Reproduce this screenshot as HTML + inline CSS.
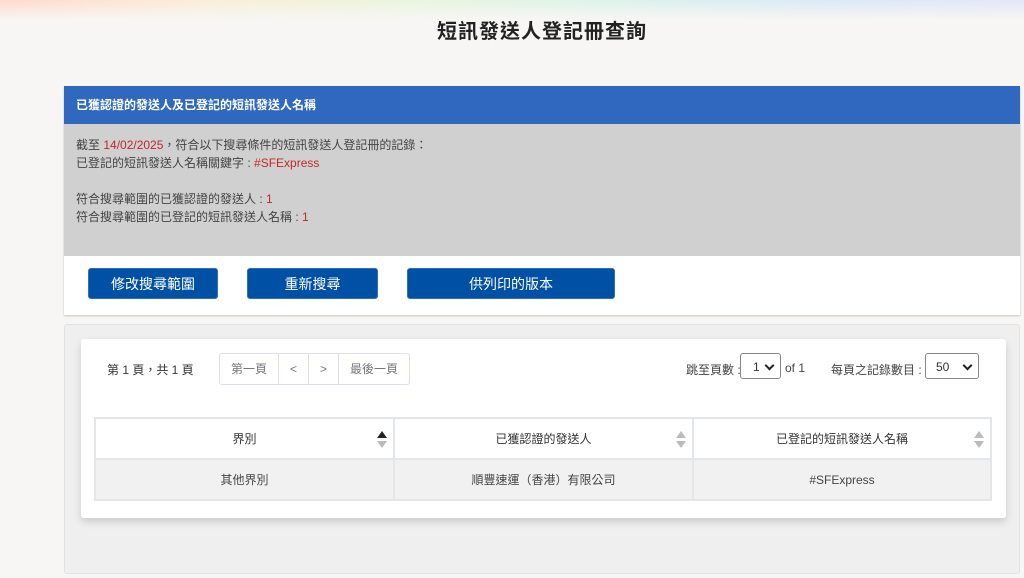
<!DOCTYPE html>
<html><head><meta charset="utf-8"><style>
*{box-sizing:border-box;margin:0;padding:0}
body{width:1024px;height:578px;overflow:hidden;background:#f7f6f4;font-family:"Liberation Sans","Noto Sans CJK TC",sans-serif;color:#333;position:relative}
.rb{position:absolute;left:0;top:0;width:1024px;height:20px;background:linear-gradient(90deg,#ffd9cf,#fbeed8,#eaf5df,#dcf3ea,#dbe9f7,#e4e6f8);}
.rb:after{content:"";position:absolute;inset:0;background:linear-gradient(180deg,rgba(247,246,244,0),#f7f6f4)}
h1{position:absolute;top:15px;left:0;width:1084px;text-align:center;font-size:20px;font-weight:bold;color:#222;letter-spacing:1px}
.p1{position:absolute;left:64px;top:86px;width:956px;height:229px;background:#fff;box-shadow:0 1px 2px rgba(0,0,0,.2)}
.hd{height:38px;background:#3068c0;color:#fff;font-size:12px;font-weight:bold;line-height:38px;padding-left:12px}
.bd{height:132px;background:#d0d0d0;font-size:12px;line-height:18px;padding:12px 12px;color:#444}
.r{color:#c0282a}
.btn{position:absolute;top:182px;height:31px;background:#0050a6;color:#fff;font-size:14px;border-radius:3px;text-align:center;line-height:31px;border:1px solid #2c6fc4}
.p2{position:absolute;left:64px;top:324px;width:956px;height:250px;background:#efefef;border:1px solid #e2e2e2;border-radius:3px}
.card{position:absolute;left:16px;top:14px;width:925px;height:179px;background:#fff;box-shadow:0 4px 8px rgba(0,0,0,.15);border-radius:3px}
.t{position:absolute;font-size:12px;color:#333}
.pg{position:absolute;left:138px;top:14px;height:32px;border:1px solid #dde;border-radius:3px;display:flex;font-size:12px;color:#777}
.pg span{border-right:1px solid #dde;line-height:30px;padding:0 11px}
.pg span:last-child{border-right:0}
.sel{position:absolute;height:26px;border:1px solid #888;border-radius:3px;font-size:12px;line-height:24px;padding-left:10px}
.sel:after{content:"";position:absolute;right:7px;top:8px;width:5px;height:5px;border-right:2px solid #222;border-bottom:2px solid #222;transform:rotate(45deg)}
table{position:absolute;left:13px;top:78px;width:898px;border-collapse:collapse;font-size:12px}
td,th{border:2px solid #e4e7ea;text-align:center;position:relative}
th{height:41px;font-weight:normal;background:#fff;color:#333}
td{height:41px;background:#f1f1f1;color:#444}
.ar{position:absolute;right:6px;top:12px;width:10px;height:18px}
.ar:before{content:"";position:absolute;left:0;top:0;border:5px solid transparent;border-bottom:7px solid #bbb;border-top:0}
.ar:after{content:"";position:absolute;left:0;top:10px;border:5px solid transparent;border-top:7px solid #bbb;border-bottom:0}
.ar.on:before{border-bottom-color:#222}
</style></head><body>
<div class="rb"></div>
<h1>短訊發送人登記冊查詢</h1>
<div class="p1">
<div class="hd">已獲認證的發送人及已登記的短訊發送人名稱</div>
<div class="bd">截至 <span class="r">14/02/2025</span>，符合以下搜尋條件的短訊發送人登記冊的記錄：<br>已登記的短訊發送人名稱關鍵字 : <span class="r">#SFExpress</span><br><br>符合搜尋範圍的已獲認證的發送人 : <span class="r">1</span><br>符合搜尋範圍的已登記的短訊發送人名稱 : <span class="r">1</span></div>
<div class="btn" style="left:24px;width:130px">修改搜尋範圍</div>
<div class="btn" style="left:183px;width:131px">重新搜尋</div>
<div class="btn" style="left:343px;width:208px">供列印的版本</div>
</div>
<div class="p2"><div class="card">
<div class="t" style="left:26px;top:22px">第 1 頁，共 1 頁</div>
<div class="pg"><span>第一頁</span><span>&lt;</span><span>&gt;</span><span>最後一頁</span></div>
<div class="t" style="left:605px;top:22px;color:#444">跳至頁數 :</div>
<div class="sel" style="left:659px;top:14px;width:41px;padding-left:12px;line-height:26px">1</div>
<div class="t" style="left:704px;top:22px;color:#444">of 1</div>
<div class="t" style="left:750px;top:22px;color:#444">每頁之記錄數目 :</div>
<div class="sel" style="left:844px;top:14px;width:54px;line-height:26px">50</div>
<table><tr><th style="width:299px">界別<i class="ar on"></i></th><th style="width:299px">已獲認證的發送人<i class="ar"></i></th><th>已登記的短訊發送人名稱<i class="ar"></i></th></tr>
<tr><td>其他界別</td><td>順豐速運（香港）有限公司</td><td>#SFExpress</td></tr></table>
</div></div>
</body></html>
